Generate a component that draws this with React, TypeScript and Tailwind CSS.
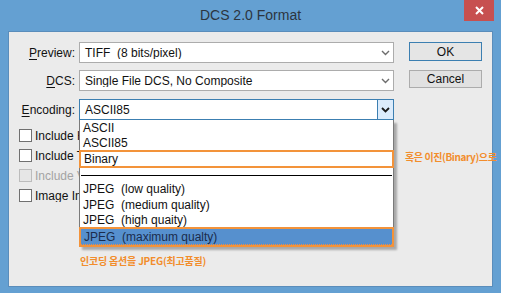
import React from "react"

const ui = { fontFamily: '"Liberation Sans", Arial, sans-serif' }
const kr = { fontFamily: '"Noto Sans CJK KR", "Noto Sans", sans-serif' }

function Chevron({ active }: { active?: boolean }) {
  return (
    <svg width="9" height="6" viewBox="0 0 9 6">
      <polyline
        points="1,1 4.5,4.5 8,1"
        fill="none"
        stroke={active ? "#1a1a1a" : "#6d6d6d"}
        strokeWidth={active ? 1.8 : 1.4}
      />
    </svg>
  )
}

function Combo({ value, focused, children }: { value: string; focused?: boolean; children?: React.ReactNode }) {
  return (
    <div
      className={
        "relative ml-[4px] flex h-[21px] w-[315px] items-center border bg-white " +
        (focused ? "border-[#3c7fb1]" : "border-[#acacac]")
      }
    >
      <span className="flex-1 truncate whitespace-pre pl-[5px] text-[12px] leading-none text-[#111]">{value}</span>
      {focused ? (
        <div className="flex h-full w-[16px] items-center justify-center border-l border-[#3c7fb1] bg-[#dcecfc]">
          <Chevron active />
        </div>
      ) : (
        <div className="flex h-full w-[16px] items-center justify-center">
          <Chevron />
        </div>
      )}
      {children}
    </div>
  )
}

function Row({ hot, rest, className, children }: { hot: string; rest: string; className?: string; children: React.ReactNode }) {
  return (
    <div className={"flex items-center " + (className ?? "")}>
      <div className="w-[66px] text-right text-[12px] leading-none text-[#111]">
        <span className="underline underline-offset-2">{hot}</span>
        {rest}
      </div>
      {children}
    </div>
  )
}

// labels run under the open list, so they are cut where the list begins
function Check({ label, disabled }: { label: string; disabled?: boolean }) {
  return (
    <div className="flex h-[13px] items-center gap-[3px] whitespace-nowrap">
      <div
        className={
          "h-[13px] w-[13px] shrink-0 border " +
          (disabled ? "border-[#bcbcbc] bg-[#e6e6e6]" : "border-[#707070] bg-white")
        }
      />
      <span
        className={
          "w-[44px] overflow-hidden text-[12px] leading-none " + (disabled ? "text-[#a3a3a3]" : "text-[#111]")
        }
      >
        {label}
      </span>
    </div>
  )
}

function Item({ text, className }: { text: string; className?: string }) {
  return (
    <div className={"flex items-center whitespace-pre pl-[3px] text-[12px] leading-none text-[#111] " + (className ?? "")}>
      {text}
    </div>
  )
}

export default function App() {
  return (
    <div className="relative h-[296px] w-[507px] overflow-hidden bg-white" style={ui}>
      <div className="flex h-[293px] w-[501px] flex-col bg-[#64a0d2] px-[8px]">
        <div className="grid h-[31px] shrink-0 grid-cols-[1fr_auto_1fr]">
          <div />
          <div className="flex items-center text-[14px] text-[#2c3540]">DCS 2.0 Format</div>
          <div className="flex justify-end">
            <div className="-mr-[1px] flex h-[21px] w-[30px] items-center justify-center bg-[#c75050]">
              <svg width="9" height="9" viewBox="0 0 9 9">
                <path d="M1 1 L8 8 M8 1 L1 8" stroke="white" strokeWidth="2" />
              </svg>
            </div>
          </div>
        </div>

        <div className="relative h-[256px] border border-[#5a8dbb] bg-[#ebebeb]">
          <div className="flex pt-[10px]">
            <div className="flex flex-col">
              <Row hot="P" rest="review:">
                <Combo value="TIFF  (8 bits/pixel)" />
              </Row>
              <Row hot="D" rest="CS:" className="mt-[7px]">
                <Combo value="Single File DCS, No Composite" />
              </Row>
              <Row hot="E" rest="ncoding:" className="mt-[8px]">
                <Combo value="ASCII85" focused>
                  <div className="absolute left-[-1px] top-[20px] z-10 flex h-[127px] w-[315px] flex-col border border-t-0 border-[#7a7a7a] bg-white shadow-[3px_3px_2px_rgba(0,0,0,0.28)]">
                    <Item text="ASCII" className="h-[16px]" />
                    <Item text="ASCII85" className="h-[14px]" />
                    <Item text="Binary" className="-mx-[1px] h-[18px] border-2 border-[#f3933a]" />
                    <div className="h-[14px] pt-[7px]">
                      <div className="mx-[1px] h-px bg-black" />
                    </div>
                    <Item text="JPEG  (low quality)" className="h-[16px]" />
                    <Item text="JPEG  (medium quality)" className="h-[16px]" />
                    <Item text="JPEG  (high quaity)" className="h-[14px]" />
                    <div className="-mx-[1px] -mb-[1px] mt-auto h-[20px] border-2 border-[#f3933a] bg-[#5690ce]">
                      <div className="flex h-full items-center whitespace-pre border-b border-dotted border-[#e8904a] pl-[3px] text-[12px] leading-none text-[#1b2c4c]">
                        JPEG  (maximum qualty)
                      </div>
                    </div>
                  </div>
                </Combo>
              </Row>
            </div>

            <div className="ml-[15px] flex flex-col">
              <div className="flex h-[19px] w-[73px] items-center justify-center border border-[#3c7fb1] bg-[#e5e5e5] text-[12px] leading-none text-[#111]">
                OK
              </div>
              <div className="mt-[9px] flex h-[18px] w-[73px] items-center justify-center border border-[#acacac] bg-[#e1e1e1] text-[12px] leading-none text-[#111]">
                Cancel
              </div>
            </div>
          </div>

          <div className="mt-[9px] flex flex-col gap-[7px] pl-[10px]">
            <Check label="Include Halftone Screen" />
            <Check label="Include Transfer Function" />
            <Check label="Include Vector Data" disabled />
            <Check label="Image Interpolation" />
          </div>
        </div>
      </div>

      <div className="absolute left-[405px] top-[150px] whitespace-nowrap text-[10px] font-bold leading-[14px] tracking-[-0.4px] text-[#f28d2c]" style={kr}>
        혹은 이진(Binary)으로
      </div>
      <div className="absolute left-[80px] top-[254px] whitespace-nowrap text-[10px] font-bold leading-[14px] tracking-[-0.2px] text-[#f28d2c]" style={kr}>
        인코딩 옵션을 JPEG(최고품질)
      </div>
    </div>
  )
}
